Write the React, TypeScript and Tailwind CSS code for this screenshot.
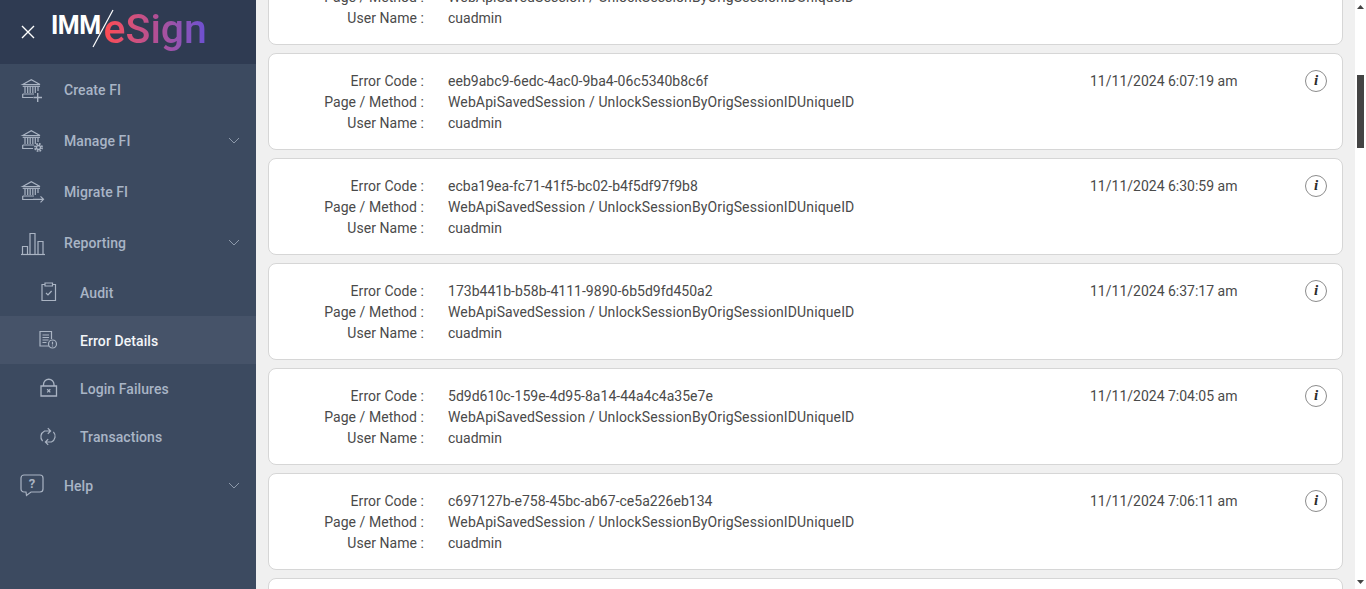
import React from "react";

const ic = "fill-none stroke-[#aab4c3]";

function Bank({ children }: { children?: React.ReactNode }) {
  return (
    <svg width="26" height="28" viewBox="0 0 26 28" className={ic} strokeWidth="1.2">
      <path d="M2.7 8.5 L11.3 3.7 L20 8.5 Z" />
      <path d="M2.7 10.3 H20" />
      <path d="M5 10.5 V17 M7.7 10.5 V17 M10.2 10.5 V17 M12.8 10.5 V17 M15.3 10.5 V17 M18 10.5 V15" />
      <path d="M2.7 18 H14 M2.7 18 V21.5 H13" />
      {children}
    </svg>
  );
}

const icons: Record<string, React.ReactNode> = {
  create: (
    <Bank>
      <path d="M17.7 17 V26 M13.4 21.5 H22" strokeWidth="1.4" />
    </Bank>
  ),
  manage: (
    <Bank>
      <circle cx="18.5" cy="20.5" r="2" strokeWidth="1.3" />
      <circle cx="18.5" cy="20.5" r="3.6" strokeWidth="1.7" strokeDasharray="1.7 1.13" />
    </Bank>
  ),
  migrate: (
    <Bank>
      <path d="M13 21.3 H23.5 M20.5 18.3 L23.5 21.3 L20.5 24.3" strokeWidth="1.2" />
    </Bank>
  ),
  reporting: (
    <svg width="26" height="26" viewBox="0 0 26 26" className={ic} strokeWidth="1.2">
      <path d="M1 24.5 H25" />
      <path d="M2.5 24 V16.5 H7.5 V24 M10 24 V3.5 H15 V24 M18 24 V11.5 H23 V24" />
    </svg>
  ),
  audit: (
    <svg width="18" height="20" viewBox="0 0 18 20" className={ic} strokeWidth="1.2">
      <path d="M5 2.5 H2 V18.5 H15.5 V2.5 H12.5" />
      <path d="M5 1 H12.5 V4 H5 Z" />
      <path d="M6 11 L8 13 L11.6 9" />
    </svg>
  ),
  error: (
    <svg width="20" height="20" viewBox="0 0 20 20" className={`${ic} -ml-[1px]`} strokeWidth="1.2">
      <path d="M10 16 H1 V1.5 H12.5 V9" />
      <path d="M3.5 5 H10 M3.5 7.5 H10 M3.5 10 H9.5 M3.5 12.5 H7.5" />
      <circle cx="13.5" cy="14" r="4" />
      <path d="M13.5 11.8 V14.5 M13.5 15.4 V16.4" />
    </svg>
  ),
  lock: (
    <svg width="18" height="20" viewBox="0 0 18 20" className={ic} strokeWidth="1.3">
      <path d="M1 8 H16.5 V18 H1 Z" />
      <path d="M3.5 8 V6.5 A5.2 5.2 0 0 1 14 6.5 V8" />
      <path d="M7.2 11.3 L10.3 14.4 M10.3 11.3 L7.2 14.4" />
    </svg>
  ),
  trans: (
    <svg width="18" height="19" viewBox="0 0 18 19" className={`${ic} -ml-[1px]`} strokeWidth="1.2">
      <path d="M3.6 14.2 A6.4 6.4 0 0 1 5.6 4 H11.5 M8.8 1.2 L11.6 4 L8.8 6.8" />
      <path d="M14.4 4.8 A6.4 6.4 0 0 1 12.4 15 H6.5 M9.2 12.2 L6.4 15 L9.2 17.8" />
    </svg>
  ),
  help: (
    <svg width="24" height="23" viewBox="0 0 24 23" className={ic} strokeWidth="1.2">
      <path d="M4 1 H20 A3 3 0 0 1 23 4 V15 A3 3 0 0 1 20 18 H11 L6.5 21.5 L6 18 H4 A3 3 0 0 1 1 15 V4 A3 3 0 0 1 4 1 Z" />
      <text x="12" y="14" textAnchor="middle" className="fill-[#aab4c3] stroke-none text-[13px] font-bold" style={{ fontFamily: "Roboto, sans-serif" }}>?</text>
    </svg>
  ),
};

function Chevron() {
  return (
    <svg width="12" height="7" viewBox="0 0 12 7" className="fill-none stroke-[#8d99aa] ml-auto mr-4" strokeWidth="1">
      <path d="M1 1 L6 6 L11 1" />
    </svg>
  );
}

function NavItem({ icon, label, chevron }: { icon: string; label: string; chevron?: boolean }) {
  return (
    <div className="flex items-center h-[51px] pl-5">
      <div className="w-[44px] flex items-center justify-start shrink-0">{icons[icon]}</div>
      <span className="pt-[2px] text-[14px] font-medium tracking-[0.08px] text-[#a9b5c6]">{label}</span>
      {chevron && <Chevron />}
    </div>
  );
}

function SubItem({ icon, label, active }: { icon: string; label: string; active?: boolean }) {
  return (
    <div className={`flex items-center h-12 pl-10 ${active ? "bg-[#465369]" : ""}`}>
      <div className="w-10 flex items-center shrink-0">{icons[icon]}</div>
      <span className={`pt-[2px] text-[14px] font-medium tracking-[0.08px] ${active ? "text-[#f3f5f8]" : "text-[#a9b5c6]"}`}>{label}</span>
    </div>
  );
}

const rows = [
  { code: "", date: "", filled: true },
  { code: "eeb9abc9-6edc-4ac0-9ba4-06c5340b8c6f", date: "11/11/2024 6:07:19 am", filled: true },
  { code: "ecba19ea-fc71-41f5-bc02-b4f5df97f9b8", date: "11/11/2024 6:30:59 am", filled: true },
  { code: "173b441b-b58b-4111-9890-6b5d9fd450a2", date: "11/11/2024 6:37:17 am", filled: true },
  { code: "5d9d610c-159e-4d95-8a14-44a4c4a35e7e", date: "11/11/2024 7:04:05 am", filled: true },
  { code: "c697127b-e758-45bc-ab67-ce5a226eb134", date: "11/11/2024 7:06:11 am", filled: true },
  { code: "", date: "", filled: false },
];

function Card({ code, date, filled }: { code: string; date: string; filled: boolean }) {
  return (
    <div className="h-[97px] shrink-0 bg-white border border-[#d6d6d6] rounded-lg pt-[16.5px] flex text-[14px] leading-[21px] text-[#4a4a4a]">
      {filled && (
        <>
          <div className="w-[155px] text-right shrink-0 tracking-[0.05px]">
            <div>Error Code :</div>
            <div>Page / Method :</div>
            <div>User Name :</div>
          </div>
          <div className="ml-6 w-[642px] shrink-0">
            <div className="h-[21px] tracking-[0.02px]">{code}</div>
            <div className="tracking-[0.125px]">WebApiSavedSession / UnlockSessionByOrigSessionIDUniqueID</div>
            <div>cuadmin</div>
          </div>
          <div className="w-[215px] shrink-0">{date}</div>
          {date && (
            <div className="w-[22px] h-[22px] -mt-[1px] rounded-full border border-[#8c8c8c] flex items-center justify-center shrink-0">
              <span className="text-[15px] font-bold italic text-[#2b2b2b]" style={{ fontFamily: "'Liberation Serif', serif" }}>i</span>
            </div>
          )}
        </>
      )}
    </div>
  );
}

export default function App() {
  return (
    <div className="flex h-[589px] w-[1366px] overflow-hidden bg-[#f0f0f0]" style={{ fontFamily: "Roboto, sans-serif" }}>
      <aside className="w-64 shrink-0 bg-[#3c4a60] flex flex-col">
        <div className="h-16 bg-[#2f3b52] flex items-center pl-[21px] shrink-0">
          <svg width="14" height="14" viewBox="0 0 14 14" className="fill-none stroke-white" strokeWidth="1.4">
            <path d="M1 1 L13 13 M13 1 L1 13" />
          </svg>
          <div className="ml-4 flex items-center h-16">
            <span className="text-[25px] leading-none font-bold text-white tracking-[-0.5px] -mt-[14px]">IMM</span>
            <svg width="24" height="40" viewBox="0 0 24 40" className="stroke-white -ml-[10px] -mt-[6px] shrink-0" strokeWidth="1.2">
              <path d="M2 38 L22 1" />
            </svg>
            <span className="-ml-[11px] mt-[2px] text-[41px] leading-none font-medium text-transparent bg-clip-text bg-gradient-to-r from-[#ff4a4f] via-[#b24f95] to-[#6b4fd3] pb-2">eSign</span>
          </div>
        </div>
        <NavItem icon="create" label="Create FI" />
        <NavItem icon="manage" label="Manage FI" chevron />
        <NavItem icon="migrate" label="Migrate FI" />
        <NavItem icon="reporting" label="Reporting" chevron />
        <SubItem icon="audit" label="Audit" />
        <SubItem icon="error" label="Error Details" active />
        <SubItem icon="lock" label="Login Failures" />
        <SubItem icon="trans" label="Transactions" />
        <NavItem icon="help" label="Help" chevron />
      </aside>
      <main className="flex-1 overflow-hidden pl-3 pr-3">
        <div className="flex flex-col gap-2 -mt-[52px]">
          {rows.map((r, i) => (
            <Card key={i} code={r.code} date={r.date} filled={r.filled} />
          ))}
        </div>
      </main>
      <div className="w-[11px] shrink-0 bg-white flex flex-col items-center">
        <svg width="7" height="4" viewBox="0 0 7 4" className="mt-[5px] fill-[#444]"><path d="M3.5 0 L7 4 H0 Z" /></svg>
        <div className="w-[7px] h-[73px] mt-[66px] bg-[#444]" />
        <svg width="7" height="4" viewBox="0 0 7 4" className="mt-auto mb-[5px] fill-[#444]"><path d="M0 0 H7 L3.5 4 Z" /></svg>
      </div>
    </div>
  );
}
